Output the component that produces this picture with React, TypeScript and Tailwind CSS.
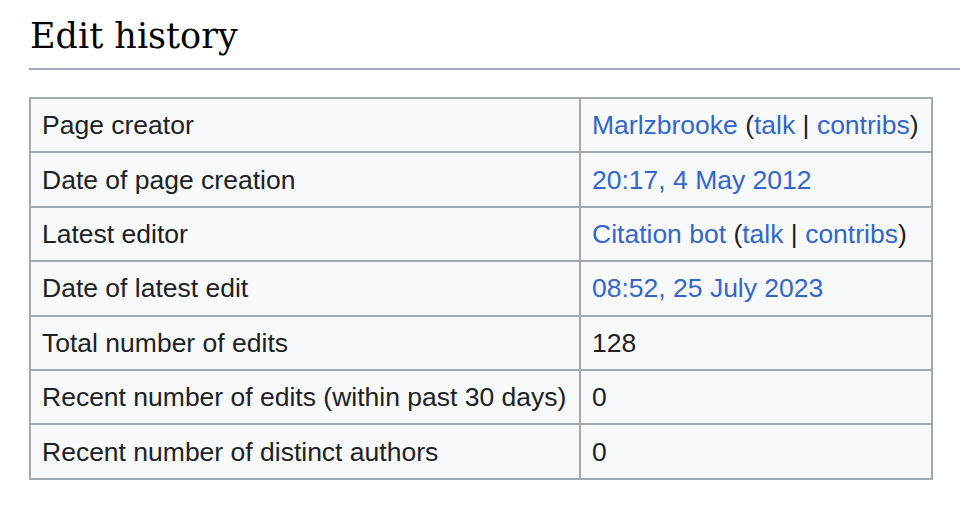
const link = "text-[#3366cc]";

function UserCell({ name }: { name: string }) {
  return (
    <span>
      <span className={link}>{name}</span> (<span className={link}>talk</span> |{" "}
      <span className={link}>contribs</span>)
    </span>
  );
}

const rows: { label: string; value: React.ReactNode }[] = [
  { label: "Page creator", value: <UserCell name="Marlzbrooke" /> },
  { label: "Date of page creation", value: <span className={link}>20:17, 4 May 2012</span> },
  { label: "Latest editor", value: <UserCell name="Citation bot" /> },
  { label: "Date of latest edit", value: <span className={link}>08:52, 25 July 2023</span> },
  { label: "Total number of edits", value: "128" },
  { label: "Recent number of edits (within past 30 days)", value: "0" },
  { label: "Recent number of distinct authors", value: "0" },
];

export default function App() {
  return (
    <div className="w-[960px] h-[508px] bg-white overflow-hidden pl-[29px] pt-[9px]">
      <h2
        className="text-[35px] leading-[54px] text-black border-b-2 border-[#a2a9b1] pl-[1px] pb-[5px]"
        style={{ fontFamily: "'DejaVu Serif', serif" }}
      >
        Edit history
      </h2>
      <table
        className="mt-[27px] border-collapse border-2 border-[#a2a9b1] bg-[#f8f9fa] text-[#202122] text-[26.5px]"
        style={{ fontFamily: "'Liberation Sans', Arial, sans-serif" }}
      >
        <tbody>
          {rows.map((r) => (
            <tr key={r.label}>
              <td className="w-[550px] h-[54.4px] border-2 border-[#a2a9b1] px-[11px] py-0 leading-[30px]">
                {r.label}
              </td>
              <td className="w-[352px] h-[54.4px] border-2 border-[#a2a9b1] px-[11px] py-0 leading-[30px]">
                {r.value}
              </td>
            </tr>
          ))}
        </tbody>
      </table>
    </div>
  );
}
